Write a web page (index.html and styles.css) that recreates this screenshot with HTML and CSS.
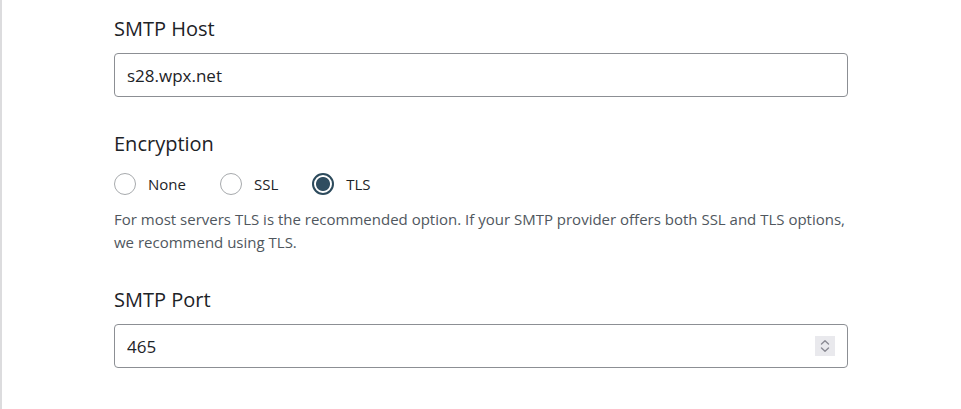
FILE: index.html
```html
<!DOCTYPE html>
<html lang="en">
<head>
  <meta charset="UTF-8">
  <meta name="viewport" content="width=device-width, initial-scale=1.0">
  <title>SMTP Settings</title>
  <link rel="stylesheet" href="styles.css">
</head>
<body>
  <div class="panel">
    <div class="form">
      <!-- Host -->
      <div class="field">
        <label class="field-label" for="smtp-host">SMTP Host</label>
        <input class="text-input" type="text" id="smtp-host" value="s28.wpx.net">
      </div>

      <!-- Encryption -->
      <div class="field field-encryption">
        <span class="field-label">Encryption</span>
        <div class="radio-group">
          <label class="radio"><input type="radio" name="encryption" value="none"> None</label>
          <label class="radio"><input type="radio" name="encryption" value="ssl"> SSL</label>
          <label class="radio"><input type="radio" name="encryption" value="tls" checked> TLS</label>
        </div>
        <p class="help">For most servers TLS is the recommended option. If your SMTP provider offers both SSL and TLS options, we recommend using TLS.</p>
      </div>

      <!-- Port -->
      <div class="field">
        <label class="field-label" for="smtp-port">SMTP Port</label>
        <div class="number-input">
          <input type="text" id="smtp-port" value="465">
          <span class="spinner">
            <svg width="10" height="14" viewBox="0 0 10 14" fill="none" stroke="#8a8a93" stroke-width="1.4" stroke-linecap="round" stroke-linejoin="round">
              <path d="M1.5 5 L5 1.8 L8.5 5"/>
              <path d="M1.5 9 L5 12.2 L8.5 9"/>
            </svg>
          </span>
        </div>
      </div>
    </div>
  </div>
</body>
</html>
```

FILE: styles.css
```css
body {
  margin: 0;
  background: #fff;
  font-family: "Open Sans", Arial, sans-serif;
  color: #1d2327;
}
.panel {
  border-left: 2px solid #dcdcde;
  min-height: 409px;
  box-sizing: border-box;
  padding: 17px 0 0 112px;
}
.form {
  width: 734px;
}
.field {
  margin-bottom: 35px;
}
.field-encryption {
  margin-bottom: 34px;
}
.field-label {
  display: block;
  font-size: 20px;
  line-height: 24px;
  margin-bottom: 12px;
}
.text-input,
.number-input {
  box-sizing: border-box;
  width: 100%;
  height: 44px;
  border: 1px solid #8c8f94;
  border-radius: 4px;
  padding: 0 12px;
  font-family: inherit;
  font-size: 17px;
  color: #1d2327;
}
.number-input {
  display: flex;
  align-items: center;
}
.number-input input {
  flex: 1;
  border: none;
  outline: none;
  padding: 0;
  font-family: inherit;
  font-size: 17px;
  color: #1d2327;
}
.spinner {
  width: 20px;
  height: 20px;
  background: #e9e9ed;
  display: flex;
  align-items: center;
  justify-content: center;
}
.radio-group {
  display: flex;
  align-items: center;
  margin-top: 17px;
}
.radio {
  display: flex;
  align-items: center;
  gap: 12px;
  margin-right: 34px;
  font-size: 15px;
  line-height: 22px;
}
.radio input {
  appearance: none;
  -webkit-appearance: none;
  box-sizing: border-box;
  width: 22px;
  height: 22px;
  margin: 0;
  border: 1px solid #a7aaad;
  border-radius: 50%;
  background: #fff;
}
.radio input:checked {
  border: 2px solid #2c4a5c;
  background: radial-gradient(circle, #2f4d60 0 6.5px, #fff 7.5px);
}
.help {
  margin: 13px 0 0;
  font-size: 15px;
  line-height: 23px;
  color: #50575e;
}
```
